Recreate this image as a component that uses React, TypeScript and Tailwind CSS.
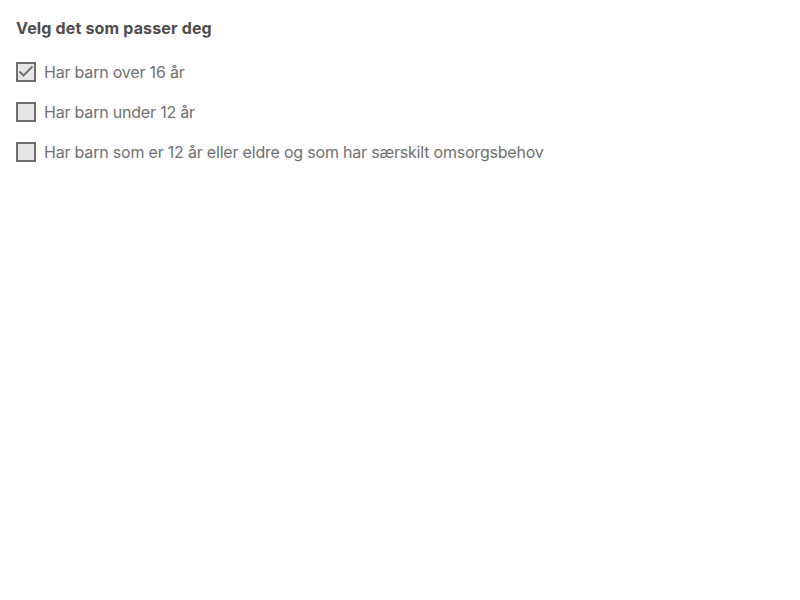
import { useState } from "react";

const options = [
  "Har barn over 16 år",
  "Har barn under 12 år",
  "Har barn som er 12 år eller eldre og som har særskilt omsorgsbehov",
];

export default function App() {
  const [checked, setChecked] = useState<boolean[]>([true, false, false]);

  const toggle = (i: number) =>
    setChecked(prev => prev.map((c, j) => (j === i ? !c : c)));

  return (
    <div className="p-4 font-['Inter','Liberation_Sans',sans-serif] bg-white min-h-[600px]">
      <h2 className="text-base leading-6 font-bold tracking-[0.16px] text-[#4d4d4d]">Velg det som passer deg</h2>
      <ul className="mt-3">
        {options.map((label, i) => (
          <li key={label} className="h-10 flex items-center">
            <label className="flex items-center gap-2 cursor-pointer">
              <button
                type="button"
                onClick={() => toggle(i)}
                aria-checked={checked[i]}
                role="checkbox"
                className="w-5 h-5 border-2 border-[#6e6e6e] bg-[#e6e6e6] flex items-center justify-center"
              >
                {checked[i] && (
                  <svg viewBox="0 0 16 16" className="w-4 h-4" fill="none" stroke="#6e6e6e" strokeWidth="1.8">
                    <path d="M1.5 7.5 L5.5 11.5 L14.5 2.5" />
                  </svg>
                )}
              </button>
              <span className="text-base leading-6 tracking-[-0.2px] text-[#707070]">{label}</span>
            </label>
          </li>
        ))}
      </ul>
    </div>
  );
}
